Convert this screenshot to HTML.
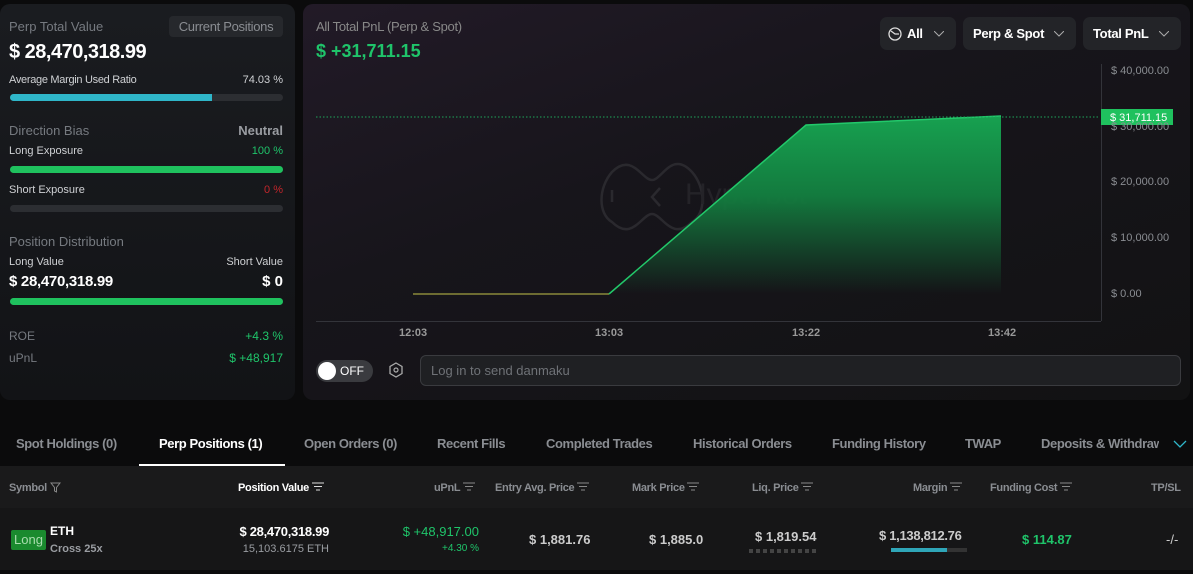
<!DOCTYPE html>
<html><head><meta charset="utf-8"><style>
*{margin:0;padding:0;box-sizing:border-box}
body{width:1193px;height:574px;overflow:hidden;background:#0b0b0c;font-family:"Liberation Sans",sans-serif;color:#ddd;position:relative}
.a{position:absolute;white-space:nowrap}
.lp{position:absolute;left:0;top:4px;width:295px;height:396px;border-radius:10px;background:linear-gradient(180deg,#1a1c20,#121316)}
.cp{position:absolute;left:303px;top:4px;width:887px;height:396px;border-radius:10px;background:linear-gradient(160deg,#221a27 0%,#17151b 40%,#121213 100%)}
.g{color:#767a80}
.w{color:#fff;font-weight:bold}
.gr{color:#1fc46a}
.bar{position:absolute;left:10px;width:273px;height:7px;border-radius:4px;background:#2c2e32}
.bar i{display:block;height:100%;border-radius:4px}
.btn{position:absolute;top:17px;height:33px;border-radius:7px;background:#232428;color:#fff;font-weight:bold;font-size:13px;line-height:33px;padding-left:12px;letter-spacing:-0.3px}
.tab{position:absolute;top:436px;font-size:13px;color:#8a8d92;font-weight:bold;white-space:nowrap;letter-spacing:-0.4px}
.th{position:absolute;top:482px;font-size:11px;color:#8a8d92;font-weight:bold;white-space:nowrap;letter-spacing:-0.3px}
.ax{position:absolute;left:1111px;font-size:11px;color:#8a8d92}
</style></head><body>
<div class="lp"></div>
<div class="a g" style="left:9px;top:19px;font-size:13px">Perp Total Value</div>
<div class="a" style="left:169px;top:16px;width:114px;height:21px;background:#26282c;border-radius:4px;color:#8a8d92;font-size:13px;line-height:21px;text-align:center;letter-spacing:-0.3px">Current Positions</div>
<div class="a w" style="left:9px;top:41px;font-size:20px;letter-spacing:-0.5px">$ 28,470,318.99</div>
<div class="a" style="left:9px;top:74px;font-size:11px;color:#cfd1d4;letter-spacing:-0.3px">Average Margin Used Ratio</div>
<div class="a" style="right:910px;top:74px;font-size:11px;color:#cfd1d4">74.03 %</div>
<div class="bar" style="top:94px"><i style="width:202px;background:#2fb6c9;border-radius:4px 0 0 4px"></i></div>
<div class="a g" style="left:9px;top:123px;font-size:13px">Direction Bias</div>
<div class="a" style="right:910px;top:123px;font-size:13px;color:#9a9da2;font-weight:bold">Neutral</div>
<div class="a" style="left:9px;top:145px;font-size:11px;color:#cfd1d4">Long Exposure</div>
<div class="a gr" style="right:910px;top:145px;font-size:11px">100 %</div>
<div class="bar" style="top:166px"><i style="width:100%;background:#1fc15e"></i></div>
<div class="a" style="left:9px;top:184px;font-size:11px;color:#cfd1d4">Short Exposure</div>
<div class="a" style="right:910px;top:184px;font-size:11px;color:#c2262b">0 %</div>
<div class="bar" style="top:205px"></div>
<div class="a g" style="left:9px;top:234px;font-size:13px">Position Distribution</div>
<div class="a" style="left:9px;top:256px;font-size:11px;color:#cfd1d4">Long Value</div>
<div class="a" style="right:910px;top:256px;font-size:11px;color:#cfd1d4">Short Value</div>
<div class="a w" style="left:9px;top:273px;font-size:15px;letter-spacing:-0.3px">$ 28,470,318.99</div>
<div class="a w" style="right:910px;top:273px;font-size:15px">$ 0</div>
<div class="bar" style="top:298px"><i style="width:100%;background:#1fc15e"></i></div>
<div class="a g" style="left:9px;top:329px;font-size:12px">ROE</div>
<div class="a gr" style="right:910px;top:329px;font-size:12px">+4.3 %</div>
<div class="a g" style="left:9px;top:351px;font-size:12px">uPnL</div>
<div class="a gr" style="right:910px;top:351px;font-size:12px">$ +48,917</div>

<div class="cp"></div>
<div class="a g" style="left:316px;top:19px;font-size:13px;color:#888;letter-spacing:-0.3px">All Total PnL (Perp &amp; Spot)</div>
<div class="a gr" style="left:316px;top:41px;font-size:18px;font-weight:bold">$ +31,711.15</div>
<div class="btn" style="left:880px;width:76px"><svg width="14" height="14" viewBox="0 0 14 14" style="position:absolute;left:8px;top:10px"><circle cx="7" cy="7" r="6" fill="none" stroke="#ddd" stroke-width="1.3"/><path d="M3 4l4 3h4" fill="none" stroke="#ddd" stroke-width="1.3"/></svg><span style="margin-left:15px">All</span><svg width="10" height="6" style="position:absolute;right:12px;top:14px"><path d="M0 0l5 5 5-5" fill="none" stroke="#aaa"/></svg></div>
<div class="btn" style="left:963px;width:113px;padding-left:10px">Perp &amp; Spot<svg width="10" height="6" style="position:absolute;right:12px;top:14px"><path d="M0 0l5 5 5-5" fill="none" stroke="#aaa"/></svg></div>
<div class="btn" style="left:1083px;width:98px;padding-left:10px">Total PnL<svg width="10" height="6" style="position:absolute;right:12px;top:14px"><path d="M0 0l5 5 5-5" fill="none" stroke="#aaa"/></svg></div>
<svg class="a" style="left:0;top:0" width="1193" height="400">
<defs><linearGradient id="f" gradientUnits="userSpaceOnUse" x1="0" y1="116" x2="0" y2="294"><stop offset="0" stop-color="#17a150"/><stop offset="0.45" stop-color="#137a3e"/><stop offset="1" stop-color="#12763c" stop-opacity="0"/></linearGradient></defs>
<g fill="none" stroke="#2a292e" stroke-width="2.5"><path d="M612 172c20-20 30 8 40 8s20-30 40-8c14 16 14 42 0 50-20 20-30-8-40-8s-20 28-40 8c-14-8-14-34 0-50z"/><path d="M612 190v12M660 188l-8 9 8 9"/></g>
<text x="685" y="204" font-family="Liberation Sans" font-size="30" fill="#242328">Hyperbot</text>
<path d="M413 294L609 294L806 125L1001 116L1001 294Z" fill="url(#f)"/>
<path d="M413 294L609 294" stroke="#8a8a3a" stroke-width="1.5" fill="none"/>
<path d="M609 294L806 125L1001 116" stroke="#22c86a" stroke-width="1.5" fill="none"/>
<line x1="316" y1="117" x2="1100" y2="117" stroke="#1ea55a" stroke-dasharray="1.5 2" stroke-width="1"/>
<line x1="316" y1="321.5" x2="1101" y2="321.5" stroke="#33343a"/>
<line x1="1101.5" y1="64" x2="1101.5" y2="321" stroke="#33343a"/>
<rect x="1101" y="109" width="72" height="16" fill="#1fc15e"/>
<text x="1110" y="121" font-family="Liberation Sans" font-size="11" fill="#fff">$ 31,711.15</text>
<path d="M1159 363l18 7-18 7 4-7z" fill="none" stroke="#999" stroke-width="1.3" stroke-linejoin="round"/>
<path d="M396 363l6 3.5v7l-6 3.5-6-3.5v-7z" fill="none" stroke="#aaa" stroke-width="1.3"/><circle cx="396" cy="370" r="2" fill="none" stroke="#aaa" stroke-width="1.2"/>
</svg>
<div class="ax" style="top:65px">$ 40,000.00</div>
<div class="ax" style="top:121px">$ 30,000.00</div>
<div class="ax" style="top:176px">$ 20,000.00</div>
<div class="ax" style="top:232px">$ 10,000.00</div>
<div class="ax" style="top:288px">$ 0.00</div>
<div class="a" style="left:399px;top:327px;font-size:11px;color:#999;font-weight:bold">12:03</div>
<div class="a" style="left:595px;top:327px;font-size:11px;color:#999;font-weight:bold">13:03</div>
<div class="a" style="left:792px;top:327px;font-size:11px;color:#999;font-weight:bold">13:22</div>
<div class="a" style="left:988px;top:327px;font-size:11px;color:#999;font-weight:bold">13:42</div>
<div class="a" style="left:316px;top:360px;width:57px;height:22px;border-radius:11px;background:#3a3b3f"><div style="position:absolute;left:2px;top:2px;width:18px;height:18px;border-radius:50%;background:#fff"></div><span style="position:absolute;left:24px;top:4px;font-size:12px;color:#fff">OFF</span></div>
<div class="a" style="left:420px;top:355px;width:761px;height:31px;border:1px solid #3a3b3f;border-radius:6px;background:#1f2023"><span style="position:absolute;left:10px;top:7px;font-size:13px;color:#6f7277">Log in to send danmaku</span></div>

<div class="tab" style="left:16px">Spot Holdings (0)</div>
<div class="tab" style="left:159px;color:#fff">Perp Positions (1)</div>
<div class="a" style="left:139px;top:464px;width:146px;height:2px;background:#fff"></div>
<div class="tab" style="left:304px">Open Orders (0)</div>
<div class="tab" style="left:437px">Recent Fills</div>
<div class="tab" style="left:546px">Completed Trades</div>
<div class="tab" style="left:693px">Historical Orders</div>
<div class="tab" style="left:832px">Funding History</div>
<div class="tab" style="left:965px">TWAP</div>
<div class="tab" style="left:1041px;width:118px;overflow:hidden">Deposits &amp; Withdrawals</div>
<svg class="a" style="left:1173px;top:440px" width="14" height="8"><path d="M1 1l6 6 6-6" fill="none" stroke="#2fb6c9" stroke-width="1.3"/></svg>
<div class="a" style="left:0;top:466px;width:1193px;height:42px;background:#1a1a1b"></div>
<div class="a" style="left:0;top:508px;width:1193px;height:62px;background:#161617"></div>
<div class="th" style="left:9px">Symbol <svg width="11" height="11" style="vertical-align:-2px"><path d="M1 1h9l-3.5 4.5v4.5l-2-1v-3.5z" fill="none" stroke="#888"/></svg></div>
<div class="th" style="left:238px;color:#fff">Position Value <svg width="12" height="9"><path d="M0 1h12M2 4.5h8M4 8h4" stroke="#ddd"/></svg></div>
<div class="th" style="left:434px">uPnL <svg width="12" height="9"><path d="M0 1h12M2 4.5h8M4 8h4" stroke="#888"/></svg></div>
<div class="th" style="left:495px">Entry Avg. Price <svg width="12" height="9"><path d="M0 1h12M2 4.5h8M4 8h4" stroke="#888"/></svg></div>
<div class="th" style="left:632px">Mark Price <svg width="12" height="9"><path d="M0 1h12M2 4.5h8M4 8h4" stroke="#888"/></svg></div>
<div class="th" style="left:752px">Liq. Price <svg width="12" height="9"><path d="M0 1h12M2 4.5h8M4 8h4" stroke="#888"/></svg></div>
<div class="th" style="left:913px">Margin <svg width="12" height="9"><path d="M0 1h12M2 4.5h8M4 8h4" stroke="#888"/></svg></div>
<div class="th" style="left:990px">Funding Cost <svg width="12" height="9"><path d="M0 1h12M2 4.5h8M4 8h4" stroke="#888"/></svg></div>
<div class="th" style="left:1151px">TP/SL</div>
<div class="a" style="left:11px;top:530px;width:35px;height:20px;background:#1a8a2e;border-radius:2px;color:#a9dcae;font-size:13px;line-height:20px;text-align:center">Long</div>
<div class="a w" style="left:50px;top:524px;font-size:12px">ETH</div>
<div class="a" style="left:50px;top:543px;font-size:11px;color:#9a9da2;font-weight:bold">Cross 25x</div>
<div class="a w" style="right:864px;top:524px;font-size:13px;letter-spacing:-0.3px">$ 28,470,318.99</div>
<div class="a" style="right:864px;top:543px;font-size:11px;color:#9a9da2">15,103.6175 ETH</div>
<div class="a gr" style="right:714px;top:524px;font-size:13px">$ +48,917.00</div>
<div class="a gr" style="right:714px;top:543px;font-size:10px">+4.30 %</div>
<div class="a" style="left:529px;top:532px;font-size:13px;color:#ccc;font-weight:bold">$ 1,881.76</div>
<div class="a" style="left:649px;top:532px;font-size:13px;color:#ccc;font-weight:bold">$ 1,885.0</div>
<div class="a" style="left:755px;top:529px;font-size:13px;color:#ccc;font-weight:bold">$ 1,819.54</div>
<div class="a" style="left:749px;top:549px;width:67px;height:4px;background:repeating-linear-gradient(90deg,#444 0 4px,transparent 4px 7px)"></div>
<div class="a" style="left:879px;top:528px;font-size:13px;color:#ccc;font-weight:bold;letter-spacing:-0.3px">$ 1,138,812.76</div>
<div class="a" style="left:891px;top:548px;width:76px;height:4px;background:#333"><div style="width:56px;height:4px;background:#2fa6b8"></div></div>
<div class="a gr" style="left:1022px;top:532px;font-size:13px;font-weight:bold">$ 114.87</div>
<div class="a" style="left:1166px;top:532px;font-size:13px;color:#ccc">-/-</div>
</body></html>
